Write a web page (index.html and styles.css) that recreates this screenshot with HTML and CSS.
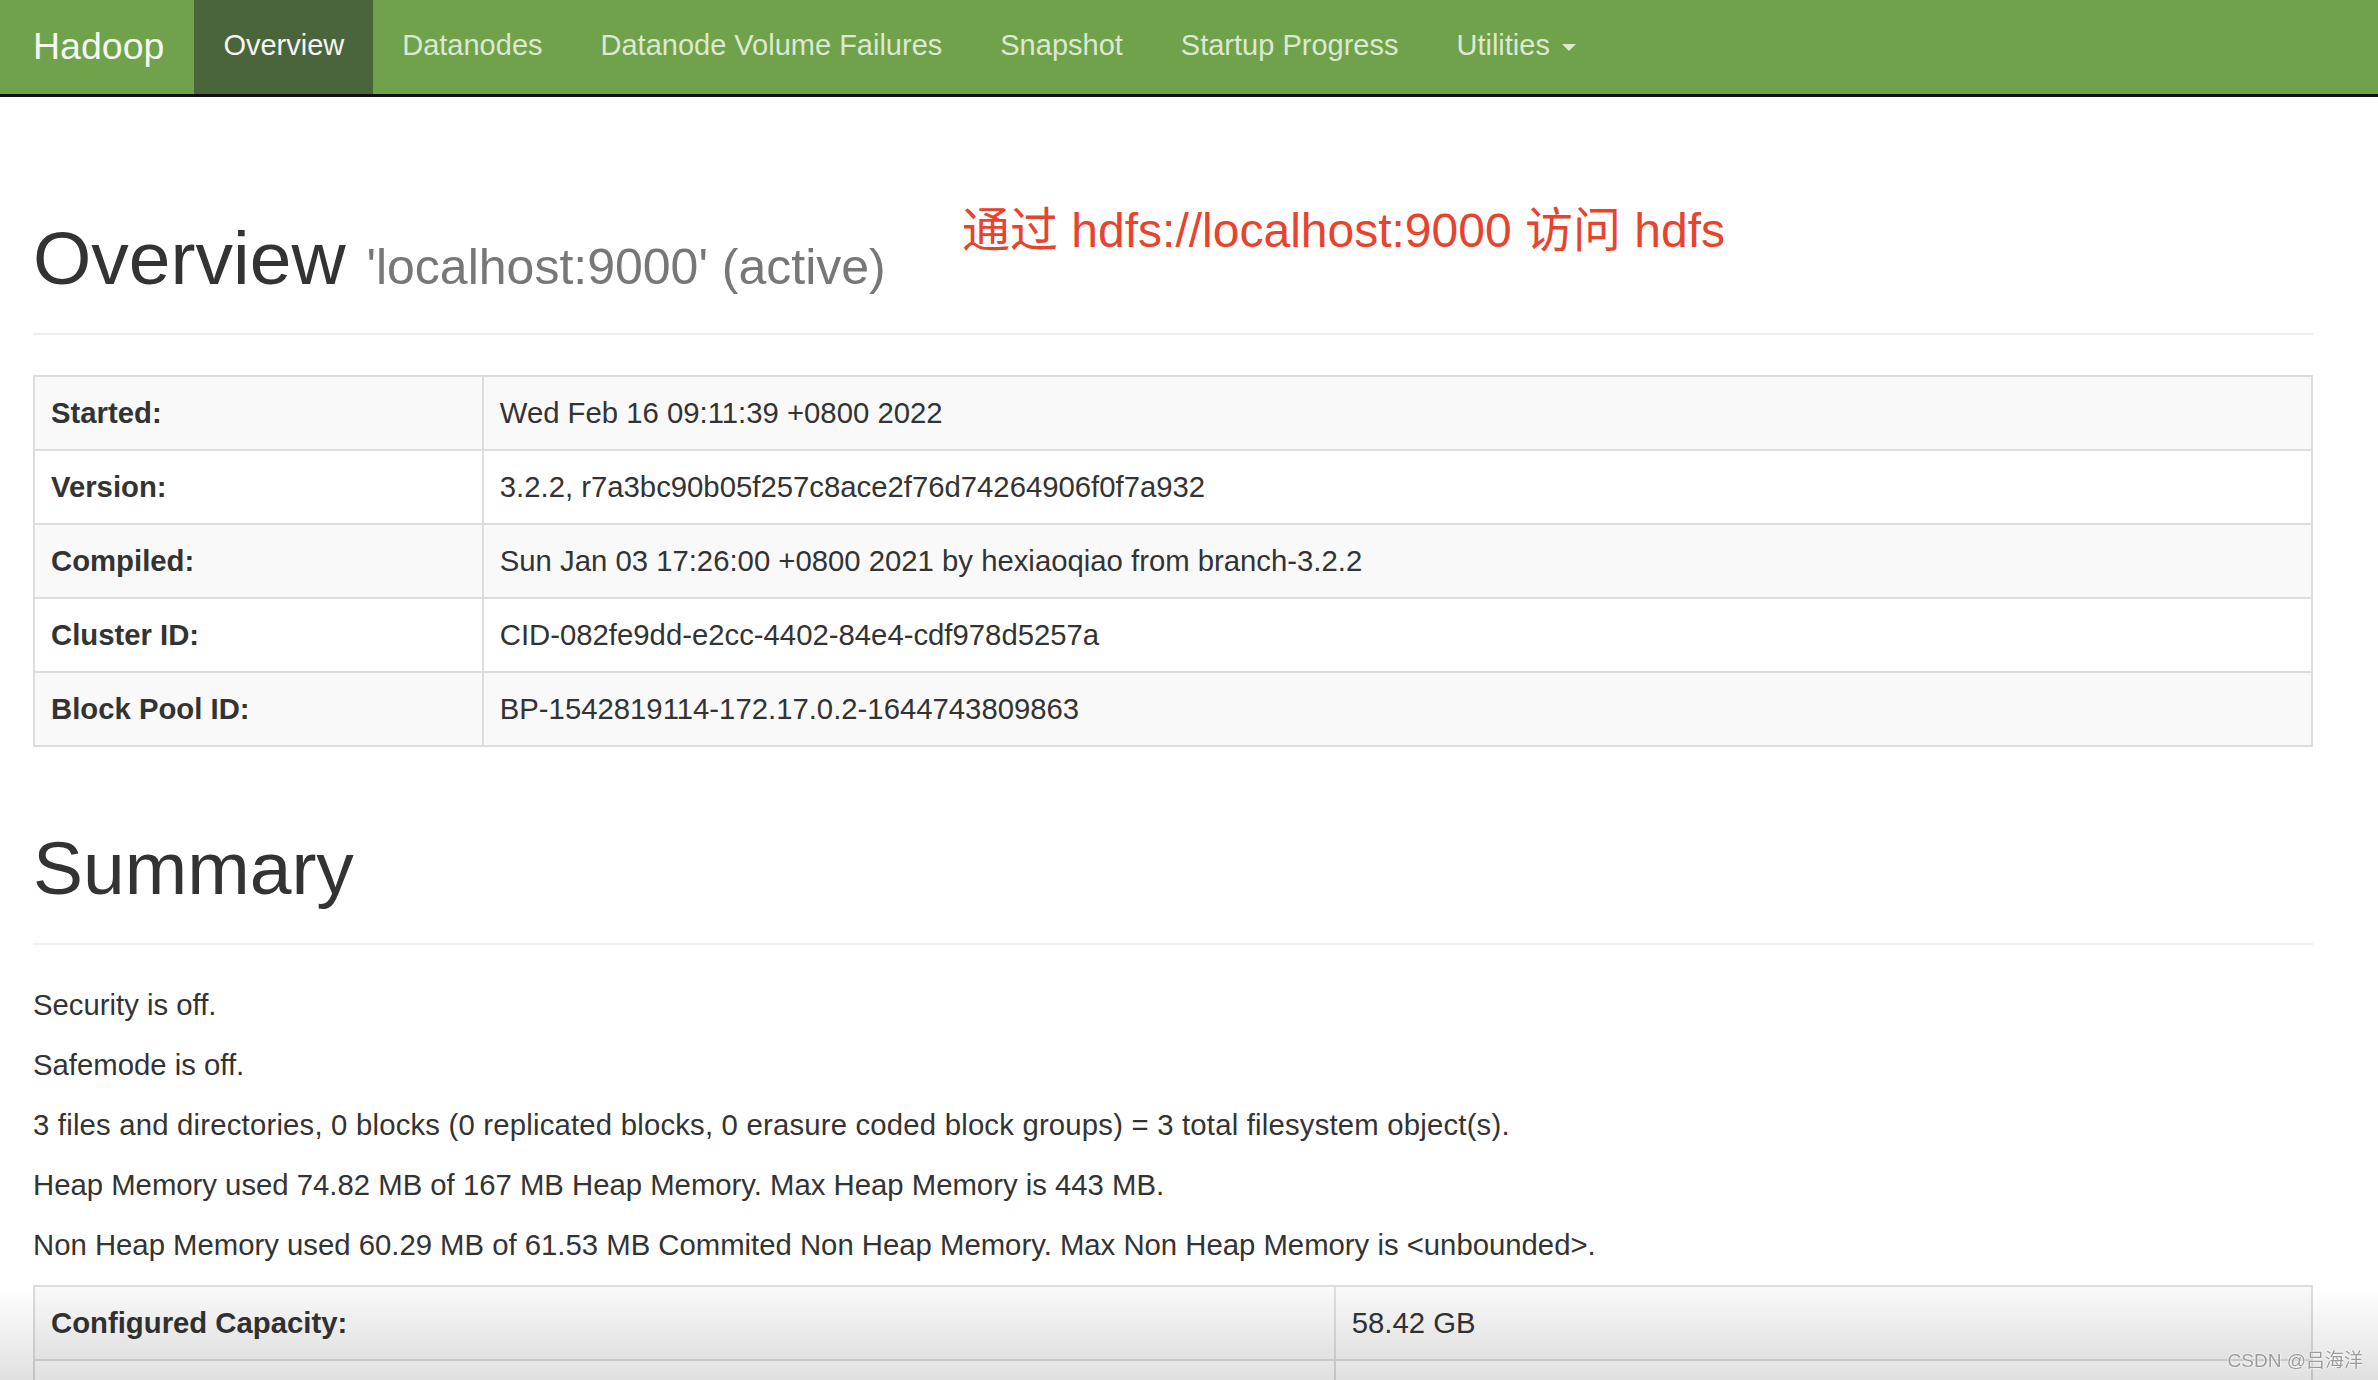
FILE: index.html
```html
<!DOCTYPE html>
<html lang="en">

<head>
	<meta charset="UTF-8">
	<meta name="viewport" content="width=device-width, initial-scale=1.0">
	<title>Namenode information</title>
	<link rel="stylesheet" href="styles.css">
</head>

<body>
	<header class="navbar">
		<a class="brand" href="#">Hadoop</a>
		<ul class="nav">
			<li class="active"><a href="#">Overview</a></li>
			<li><a href="#">Datanodes</a></li>
			<li><a href="#">Datanode Volume Failures</a></li>
			<li><a href="#">Snapshot</a></li>
			<li><a href="#">Startup Progress</a></li>
			<li><a href="#">Utilities <span class="caret"></span></a></li>
		</ul>
	</header>

	<div class="container">
		<div class="page-header">
			<h1>Overview <small>'localhost:9000' (active)</small></h1>
		</div>

		<table class="table info">
			<tr><th>Started:</th><td>Wed Feb 16 09:11:39 +0800 2022</td></tr>
			<tr><th>Version:</th><td>3.2.2, r7a3bc90b05f257c8ace2f76d74264906f0f7a932</td></tr>
			<tr><th>Compiled:</th><td>Sun Jan 03 17:26:00 +0800 2021 by hexiaoqiao from branch-3.2.2</td></tr>
			<tr><th>Cluster ID:</th><td>CID-082fe9dd-e2cc-4402-84e4-cdf978d5257a</td></tr>
			<tr><th>Block Pool ID:</th><td>BP-1542819114-172.17.0.2-1644743809863</td></tr>
		</table>

		<div class="page-header">
			<h1>Summary</h1>
		</div>

		<p>Security is off.</p>
		<p>Safemode is off.</p>
		<p class="wide">3 files and directories, 0 blocks (0 replicated blocks, 0 erasure coded block groups) = 3 total filesystem object(s).</p>
		<p>Heap Memory used 74.82 MB of 167 MB Heap Memory. Max Heap Memory is 443 MB.</p>
		<p>Non Heap Memory used 60.29 MB of 61.53 MB Commited Non Heap Memory. Max Non Heap Memory is &lt;unbounded&gt;.</p>

		<table class="table summary">
			<tr><th>Configured Capacity:</th><td>58.42 GB</td></tr>
			<tr><th>&nbsp;</th><td>&nbsp;</td></tr>
		</table>
	</div>

	<!-- 截图上的标注 -->
	<div class="note">通过 hdfs://localhost:9000 访问 hdfs</div>
	<div class="fade"></div>
	<div class="watermark">CSDN @吕海洋</div>
</body>

</html>
```

FILE: styles.css
```css
html,
body {
	margin: 0;
}

body {
	font-family: "Liberation Sans", Arial, "Noto Sans CJK SC", sans-serif;
	font-size: 29.3px;
	line-height: 40px;
	color: #333;
	background: #fff;
}

a {
	text-decoration: none;
}

/* navbar */
.navbar {
	display: flex;
	height: 94px;
	padding-left: 33px;
	background-color: #6fa24b;
	border-bottom: 3px solid #111;
}

.brand {
	padding: 26px 30px 0 0;
	font-size: 37.5px;
	line-height: 40px;
	color: #f3f7ef;
}

.nav {
	display: flex;
	margin: 0;
	padding: 0;
	list-style: none;
}

.nav a {
	display: block;
	box-sizing: border-box;
	height: 100%;
	padding: 25px 29px 0;
	font-size: 29px;
	color: #dce9d1;
}

.nav .active a {
	background-color: #4b653a;
	color: #f4f4f4;
}

.caret {
	display: inline-block;
	width: 0;
	height: 0;
	margin-left: 4px;
	vertical-align: middle;
	border-top: 7px solid;
	border-left: 7px solid transparent;
	border-right: 7px solid transparent;
}

/* content */
.container {
	width: 2280px;
	padding: 40px 0 0 33px;
}

.page-header {
	margin: 80px 0 40px;
	padding-bottom: 34px;
	border-bottom: 2px solid #eee;
}

h1 {
	margin: 0;
	font-size: 75px;
	line-height: 82px;
	font-weight: normal;
	color: #333;
}

/* line-height 고정 안하면 h1 줄높이가 커짐 */
h1 small {
	font-size: 50px;
	line-height: 1;
	color: #777;
}

p {
	margin: 0 0 20px;
}

p.wide {
	letter-spacing: 0.2px;
}

.table {
	width: 100%;
	border-collapse: collapse;
	border: 2px solid #ddd;
}

.table th,
.table td {
	padding: 16px;
	border: 2px solid #ddd;
	text-align: left;
	vertical-align: top;
}

.table tr:nth-child(odd) {
	background-color: #f9f9f9;
}

.info th {
	width: 19.7%;
}

.summary th {
	width: 57.1%;
}

/* overlays from the screenshot */
.note {
	position: absolute;
	left: 962px;
	top: 203px;
	font-size: 48px;
	line-height: 56px;
	color: #e8432d;
	white-space: nowrap;
}

.fade {
	position: fixed;
	left: 0;
	right: 0;
	bottom: 0;
	height: 92px;
	background: linear-gradient(rgba(0, 0, 0, 0), rgba(0, 0, 0, 0.12));
	pointer-events: none;
}

.watermark {
	position: fixed;
	right: 15px;
	bottom: 7px;
	font-size: 19px;
	line-height: 24px;
	color: #9b9b9b;
	text-shadow: 0 0 2px #fff, 0 0 2px #fff;
}
```
